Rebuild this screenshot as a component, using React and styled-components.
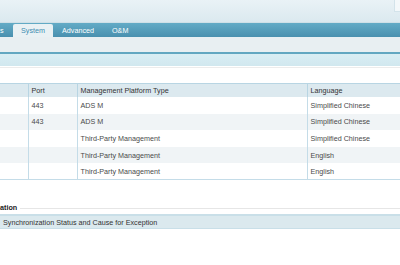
import styled, { createGlobalStyle } from "styled-components";

const GlobalStyle = createGlobalStyle`
  html, body { margin: 0; padding: 0; background: #fff; }
  body { font-family: Tahoma, "Liberation Sans", Arial, sans-serif; font-size: 7.2px; }
`;

const Page = styled.div`
  width: 400px;
  height: 265px;
  overflow: hidden;
  position: relative;
  background: #fff;
`;

const TopBar = styled.div`
  height: 23px;
  background: linear-gradient(#e9f2f6, #dbe9ef);
  border-bottom: 1px solid #cfe0e7;
  box-sizing: border-box;
  display: flex;
  justify-content: flex-end;
`;

const CornerBox = styled.div`
  width: 5px;
  height: 11px;
  background: #f3f8fa;
  border-left: 1px solid #d3e3ea;
  border-bottom: 1px solid #d3e3ea;
`;

const TabBar = styled.div`
  height: 14px;
  background: linear-gradient(#63abc6, #4990af);
  display: flex;
  align-items: stretch;
`;

const Tab = styled.div`
  display: flex;
  align-items: center;
  justify-content: ${p => (p.$active ? "center" : "flex-start")};
  width: ${p => p.$w}px;
  box-sizing: border-box;
  padding-left: ${p => p.$pl || 0}px;
  color: ${p => (p.$active ? "#3e8db2" : "#fff")};
  background: ${p => (p.$active ? "#e9f1f4" : "transparent")};
  border-radius: ${p => (p.$active ? "2px 2px 0 0" : "0")};
  margin-top: ${p => (p.$active ? "1px" : "0")};
  white-space: nowrap;
`;

const SubBar = styled.div`
  height: 15px;
  background: #e8eff2;
`;

const BlueLine = styled.div`
  height: 2px;
  background: #62a7c1;
`;

const LightBand = styled.div`
  height: 12px;
  background: linear-gradient(#d9eef4, #d1e8ef);
`;

const ContentArea = styled.div`
  padding-top: 1px;
`;

const FaintLine = styled.div`
  height: 1px;
  background: #ececec;
  margin-bottom: 15px;
`;

const Table = styled.table`
  border-collapse: collapse;
  table-layout: fixed;
  width: 430px;
  color: #4a4a4a;
`;

const Th = styled.th`
  height: 13px;
  padding: 0 0 0 3px;
  text-align: left;
  font-weight: normal;
  color: #333;
  background: #dce9ef;
  border-top: 1px solid #b8d5e3;
  border-left: ${p => (p.$first ? "none" : "1px solid #b8d5e3")};
  white-space: nowrap;
  overflow: hidden;
`;

const Tr = styled.tr`
  background: ${p => (p.$alt ? "#f0f4f6" : "#fff")};
`;

const Td = styled.td`
  height: 16.6px;
  padding: 0 0 0 3px;
  border-left: ${p => (p.$first ? "none" : "1px solid #c4dce8")};
  white-space: nowrap;
  overflow: hidden;
  box-sizing: border-box;
`;

const TableBottom = styled.tbody`
  tr:last-child td { border-bottom: 1px solid #c4dce8; }
`;

const SectionTitle = styled.div`
  display: flex;
  align-items: center;
  gap: 3px;
  margin-top: 22px;
  height: 10px;
  font-weight: bold;
  color: #222;
`;

const TitleRule = styled.div`
  flex: 1;
  height: 1px;
  background: #e6e6e6;
  margin-top: 2px;
`;

const InfoBar = styled.div`
  margin-top: 2px;
  height: 15px;
  box-sizing: border-box;
  background: #dbe9ee;
  border-top: 2px solid #c9dfe8;
  border-bottom: 1px solid #c9dfe8;
  display: flex;
  align-items: center;
  padding-left: 3px;
  color: #333;
`;

const rows = [
  { port: "443", type: "ADS M", lang: "Simplified Chinese" },
  { port: "443", type: "ADS M", lang: "Simplified Chinese" },
  { port: "", type: "Third-Party Management", lang: "Simplified Chinese" },
  { port: "", type: "Third-Party Management", lang: "English" },
  { port: "", type: "Third-Party Management", lang: "English" },
];

export default function App() {
  return (
    <Page>
      <GlobalStyle />
      <TopBar>
        <CornerBox />
      </TopBar>
      <TabBar>
        <Tab $w={13}>s</Tab>
        <Tab $w={40} $active>System</Tab>
        <Tab $w={50} $pl={9}>Advanced</Tab>
        <Tab $w={40} $pl={9}>O&amp;M</Tab>
      </TabBar>
      <SubBar />
      <BlueLine />
      <LightBand />
      <ContentArea>
        <FaintLine />
        <Table>
          <colgroup>
            <col style={{ width: 28 }} />
            <col style={{ width: 49 }} />
            <col style={{ width: 230 }} />
            <col style={{ width: 123 }} />
          </colgroup>
          <thead>
            <tr>
              <Th $first></Th>
              <Th>Port</Th>
              <Th>Management Platform Type</Th>
              <Th>Language</Th>
            </tr>
          </thead>
          <TableBottom>
            {rows.map((r, i) => (
              <Tr key={i} $alt={i % 2 === 1}>
                <Td $first></Td>
                <Td>{r.port}</Td>
                <Td>{r.type}</Td>
                <Td>{r.lang}</Td>
              </Tr>
            ))}
          </TableBottom>
        </Table>
        <SectionTitle>
          ation
          <TitleRule />
        </SectionTitle>
        <InfoBar>Synchronization Status and Cause for Exception</InfoBar>
      </ContentArea>
    </Page>
  );
}
